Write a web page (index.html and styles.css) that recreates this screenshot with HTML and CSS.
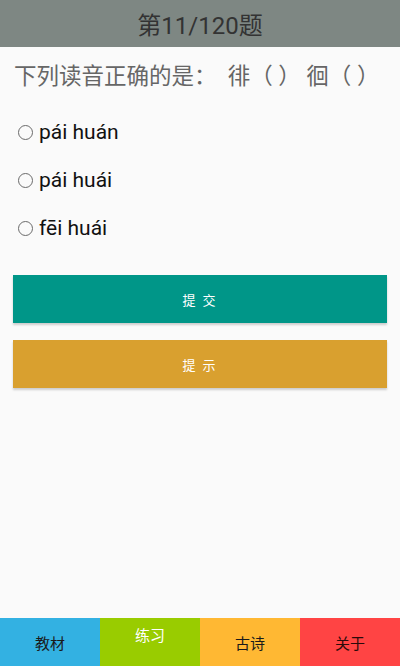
FILE: index.html
```html
<!DOCTYPE html>
<html lang="zh">
<head>
<meta charset="utf-8">
<link rel="stylesheet" href="styles.css">
</head>
<body>
<div class="app">
  <header class="topbar">第11/120题</header>
  <div class="question">下列读音正确的是：  徘（ ） 徊（ ）</div>
  <ul class="options">
    <li class="option"><span class="radio"></span><span class="label">pái huán</span></li>
    <li class="option"><span class="radio"></span><span class="label">pái huái</span></li>
    <li class="option"><span class="radio"></span><span class="label">fēi huái</span></li>
  </ul>
  <div class="actions">
    <button class="btn btn-submit">提 交</button>
    <button class="btn btn-hint">提 示</button>
  </div>
  <nav class="tabbar">
    <div class="tab tab-book">教材</div>
    <div class="tab tab-practice">练习</div>
    <div class="tab tab-poem">古诗</div>
    <div class="tab tab-about">关于</div>
  </nav>
</div>
</body>
</html>
```
FILE: styles.css
```css
html, body {
  margin: 0;
  padding: 0;
}
body {
  background: #fafafa;
  font-family: Roboto, "Noto Sans CJK SC", sans-serif;
}
.app {
  height: 666px;
  display: flex;
  flex-direction: column;
}
.topbar {
  height: 47px;
  background: #7e8783;
  color: #333;
  font-size: 24px;
  display: flex;
  align-items: center;
  justify-content: center;
}
.question {
  margin: 14px 0 0 14px;
  height: 30px;
  line-height: 30px;
  font-size: 22.5px;
  color: #666;
  white-space: pre;
}
.options {
  list-style: none;
  margin: 17px 0 0 0;
  padding: 0;
}
.option {
  height: 48px;
  display: flex;
  align-items: center;
  padding-left: 18px;
}
.radio {
  width: 13px;
  height: 13px;
  border: 1.6px solid #6a6a6a;
  border-radius: 50%;
  margin-right: 6px;
}
.label {
  font-size: 21px;
  color: #111;
}
.actions {
  margin: 23px 13px 0;
  display: flex;
  flex-direction: column;
  gap: 17px;
}
.btn {
  height: 48px;
  border: none;
  color: #fff;
  font-family: "Noto Sans CJK SC", sans-serif;
  font-size: 13px;
  letter-spacing: 2px;
  box-shadow: 0 2px 2px rgba(0,0,0,0.18);
}
.btn-submit { background: #009688; }
.btn-hint { background: #d9a02f; }
.tabbar {
  margin-top: auto;
  height: 48px;
  display: grid;
  grid-template-columns: repeat(4, 1fr);
}
.tab {
  display: flex;
  align-items: center;
  justify-content: center;
  font-family: "Noto Sans CJK SC", sans-serif;
  font-size: 15px;
  color: #1a1a1a;
}
.tab-book { background: #33b1e2; }
.tab-practice {
  background: #99cc00;
  color: #fff;
  align-items: flex-start;
  padding-top: 6px;
}
.tab-poem { background: #ffb833; }
.tab-about { background: #ff4444; color: #2a0a0a; }
```
